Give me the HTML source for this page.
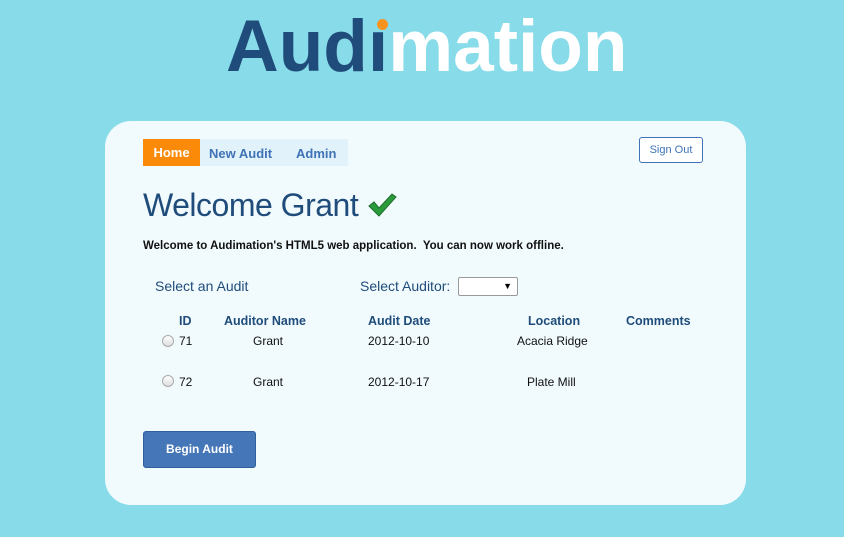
<!DOCTYPE html>
<html><head><style>
body{margin:0;width:844px;height:537px;background:#88dbe9;font-family:"Liberation Sans",sans-serif;position:relative;overflow:hidden}
.logo{position:absolute;left:226px;top:2px;font-size:73px;font-weight:bold;letter-spacing:0px;color:#fff;line-height:90px;white-space:nowrap}
.logo .b{color:#1f4c7a}
.dot{position:absolute;left:151px;top:17px;width:11px;height:11px;border-radius:50%;background:#f7931e}
.card{position:absolute;left:105px;top:121px;width:641px;height:384px;background:#f1fafd;border-radius:26px}
.nav{position:absolute;left:38px;top:18px;height:27px;width:205px;background:#e2f2fb;font-size:13px;font-weight:bold;color:#3f73b6}
.nav span{position:absolute;top:7px}
.home{position:absolute;left:0;top:0;width:57px;height:27px;background:#fb8a09;color:#fff;text-align:center;line-height:27px}
.so{position:absolute;left:534px;top:16px;width:62px;height:24px;border:1px solid #3f73b6;border-radius:3px;font-size:11px;color:#3f73b6;text-align:center;line-height:24px;background:#fff}
h1{position:absolute;left:38px;top:66px;margin:0;font-size:32px;font-weight:normal;color:#1f4c7a;letter-spacing:-0.5px}
.t{position:absolute;font-size:12px;color:#111}
.h{font-weight:bold;color:#1f4c7a;font-size:12.5px}
.r{position:absolute;width:10px;height:10px;border-radius:50%;border:1px solid #aaa;background:linear-gradient(#fff,#ddd)}
</style></head><body>
<div class="logo"><span class="b">Audı</span>mation<div class="dot"></div></div>
<div class="card">
<div class="nav"><div class="home">Home</div><span style="left:66px">New Audit</span><span style="left:153px">Admin</span></div>
<div class="so">Sign Out</div>
<h1>Welcome Grant <svg width="30" height="26" viewBox="0 0 30 26" style="vertical-align:-2px"><path d="M2 14 L7 10 L12 16 L25 2 L29 5 L12 24 Z" fill="#2a9a3a" stroke="#1d6e2a" stroke-width="1"/></svg></h1>
<div class="t" style="left:38px;top:119px;font-weight:bold;font-size:11.5px">Welcome to Audimation's HTML5 web application.&nbsp; You can now work offline.</div>
<div class="t" style="left:50px;top:157px;font-size:14px;color:#1f4c7a">Select an Audit</div>
<div class="t" style="left:255px;top:157px;font-size:14px;color:#1f4c7a">Select Auditor:</div>
<div style="position:absolute;left:353px;top:156px;width:58px;height:17px;border:1px solid #999;background:#fff;border-radius:2px;font-size:9px;text-align:right"><span style="margin-right:5px;line-height:17px">▼</span></div>
<div class="t h" style="left:74px;top:193px">ID</div>
<div class="t h" style="left:119px;top:193px">Auditor Name</div>
<div class="t h" style="left:263px;top:193px">Audit Date</div>
<div class="t h" style="left:423px;top:193px">Location</div>
<div class="t h" style="left:521px;top:193px">Comments</div>
<div class="r" style="left:57px;top:214px"></div>
<div class="t" style="left:74px;top:213px">71</div>
<div class="t" style="left:148px;top:213px">Grant</div>
<div class="t" style="left:263px;top:213px">2012-10-10</div>
<div class="t" style="left:412px;top:213px">Acacia Ridge</div>
<div class="r" style="left:57px;top:254px"></div>
<div class="t" style="left:74px;top:254px">72</div>
<div class="t" style="left:148px;top:254px">Grant</div>
<div class="t" style="left:263px;top:254px">2012-10-17</div>
<div class="t" style="left:422px;top:254px">Plate Mill</div>
<div style="position:absolute;left:38px;top:310px;width:111px;height:35px;background:#4576b8;border:1px solid #2f5f9d;border-radius:3px;color:#fff;font-size:12px;font-weight:bold;text-align:center;line-height:35px">Begin Audit</div>
</div>
</body></html>
